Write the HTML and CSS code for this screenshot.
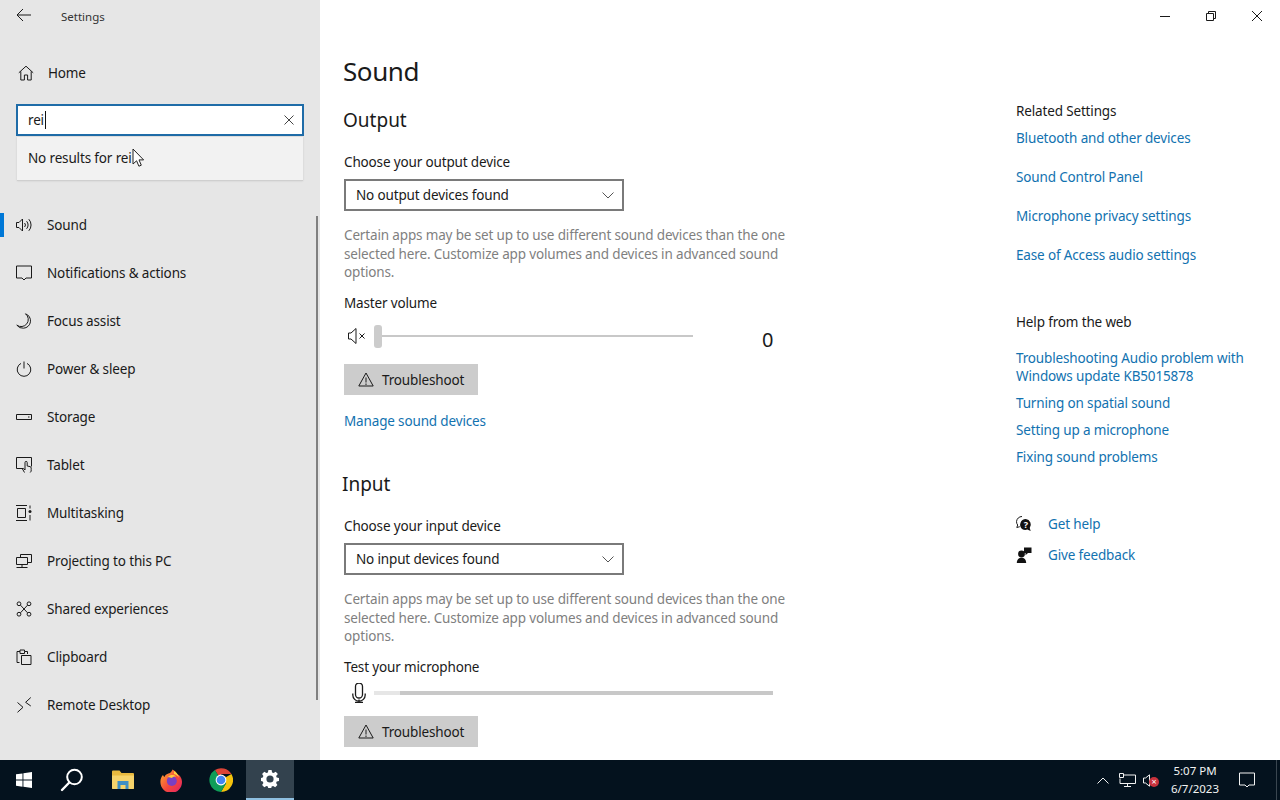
FILE: index.html
```html
<!DOCTYPE html>
<html lang="en">
<head>
<meta charset="utf-8">
<title>Settings</title>
<link rel="stylesheet" href="styles.css">
</head>
<body>
<div class="window">
  <aside class="sidebar">
    <div class="titlebar">
      <svg class="back" width="16" height="14" viewBox="0 0 16 14"><path d="M7 1 1 7l6 6M1 7h14" class="ln"/></svg>
      <span class="app-title">Settings</span>
    </div>
    <a class="home">
      <svg class="ico" width="16" height="16" viewBox="0 0 16 16"><path d="M.8 7.8 8 1.2l7.2 6.6M2.8 6.4v8.6h3.6v-5h3.2v5h3.6V6.4" class="ln"/></svg>
      <span>Home</span>
    </a>
    <div class="search">
      <span class="query">rei</span><span class="caret"></span>
      <svg class="clear" width="10" height="10" viewBox="0 0 10 10"><path d="M.5.5l9 9M9.5.5l-9 9" class="ln thin"/></svg>
    </div>
    <div class="results">No results for rei</div>
    <svg class="cursor" width="14" height="20" viewBox="0 0 14 20"><path d="M1 1v15l3.6-3.2 2.3 5.4 2.4-1-2.3-5.3h4.6z" fill="#fff" stroke="#222" stroke-width="1"/></svg>
    <nav class="nav">
      <a class="nav-item active">
        <svg class="ico" width="16" height="16" viewBox="0 0 16 16"><path d="M.5 5.500h2.500L6.500 2v12L3 10.500H.5zM8.600 6a3 3 0 0 1 0 4M10.600 4.200a5.600 5.600 0 0 1 0 7.600M12.800 2.200a8.600 8.600 0 0 1 0 11.600" class="ln"/></svg>
        <span>Sound</span>
      </a>
      <a class="nav-item">
        <svg class="ico" width="16" height="16" viewBox="0 0 16 16"><path d="M.5 1h15v12h-5.500L8 15l-2-2H.5z" class="ln"/></svg>
        <span>Notifications &amp; actions</span>
      </a>
      <a class="nav-item">
        <svg class="ico" width="16" height="16" viewBox="0 0 16 16"><path d="M9.500.8a7 7 0 0 1-8.700 11.300 7.300 7.300 0 0 0 6.700 3.100A7.400 7.400 0 0 0 9.500.8z" class="ln"/></svg>
        <span>Focus assist</span>
      </a>
      <a class="nav-item">
        <svg class="ico" width="16" height="16" viewBox="0 0 16 16"><path d="M5 2.400a6.800 6.800 0 1 0 6 0M8 .5v7" class="ln"/></svg>
        <span>Power &amp; sleep</span>
      </a>
      <a class="nav-item">
        <svg class="ico" width="16" height="16" viewBox="0 0 16 16"><path d="M.5 5.500h15v5H.5zM12 8h1.500" class="ln"/></svg>
        <span>Storage</span>
      </a>
      <a class="nav-item">
        <svg class="ico" width="16" height="16" viewBox="0 0 16 16"><path d="M7 11.500H.5V.5h15v9M8.500 15.500l-2-3.500 1-.6 1.500 1.600V5.500a1.100 1.100 0 0 1 2.200 0V9l2.800.6a1.500 1.500 0 0 1 1.200 1.500v1.400a3 3 0 0 1-1 3" class="ln"/></svg>
        <span>Tablet</span>
      </a>
      <a class="nav-item">
        <svg class="ico" width="16" height="16" viewBox="0 0 16 16"><path d="M0 .5h11M0 15.500h11M1.500 3.500h8v9h-8zM14 .5v3M14 10v5.500" class="ln"/><circle cx="14" cy="6.500" r="1.500" fill="#1a1a1a"/></svg>
        <span>Multitasking</span>
      </a>
      <a class="nav-item">
        <svg class="ico" width="16" height="16" viewBox="0 0 16 16"><path d="M4.500 4V1.500h11v8H12M.5 4.500h11v7H.5zM.5 14.500h11M6 11.500v3" class="ln"/></svg>
        <span>Projecting to this PC</span>
      </a>
      <a class="nav-item">
        <svg class="ico" width="16" height="16" viewBox="0 0 16 16"><circle cx="3" cy="2.800" r="1.900" class="ln"/><circle cx="13" cy="2.800" r="1.900" class="ln"/><circle cx="3" cy="13.200" r="1.900" class="ln"/><circle cx="13" cy="13.200" r="1.900" class="ln"/><path d="M4.500 4.200l7 7.600M11.500 4.200l-7 7.600" class="ln"/></svg>
        <span>Shared experiences</span>
      </a>
      <a class="nav-item">
        <svg class="ico" width="16" height="16" viewBox="0 0 16 16"><path d="M3.500 13.500h-2.500V2.500h3V1h4.500v1.500h3v2.500M4 2.500v2h4.500v-2M5.500 6.500H15v9H5.500z" class="ln"/></svg>
        <span>Clipboard</span>
      </a>
      <a class="nav-item">
        <svg class="ico" width="16" height="16" viewBox="0 0 16 16"><path d="M1.500 5.500 7 10.300l-5.500 5M14.800.5 9.600 5.300l5.200 3.700" class="ln"/></svg>
        <span>Remote Desktop</span>
      </a>
    </nav>
    <div class="scrollbar"></div>
  </aside>

  <main class="content">
    <div class="controls">
      <svg class="ctl" width="10" height="10" viewBox="0 0 10 10"><path d="M0 5.500h10" class="ln"/></svg>
      <svg class="ctl" width="10" height="10" viewBox="0 0 10 10"><path d="M.5 2.500h7v7h-7zM2.500 2.500v-2h7v7h-2" class="ln"/></svg>
      <svg class="ctl" width="10" height="10" viewBox="0 0 10 10"><path d="M0 0l10 10M10 0 0 10" class="ln"/></svg>
    </div>

    <section class="main-col">
      <h1 class="page-title">Sound</h1>
      <h2 class="section first">Output</h2>
      <div class="label gap-label">Choose your output device</div>
      <div class="select"><span>No output devices found</span><svg width="12" height="7" viewBox="0 0 12 7"><path d="M.5.500 6 6l5.500-5.500" class="ln grey"/></svg></div>
      <p class="hint">Certain apps may be set up to use different sound devices than the one selected here. Customize app volumes and devices in advanced sound options.</p>
      <div class="label after-hint">Master volume</div>
      <div class="volume">
        <svg class="vol-icon" width="18" height="18" viewBox="0 0 18 18"><path d="M.5 6h2.500L8 1.500v15L3 12H.5zM11.500 6.500l5 5M16.500 6.500l-5 5" class="ln"/></svg>
        <span class="thumb"></span>
        <span class="track"></span>
        <span class="vol-value">0</span>
      </div>
      <button class="trouble first-btn">
        <svg width="16" height="15" viewBox="0 0 16 15"><path d="M8 1 .8 14h14.400zM8 5.500v5M8 11.500v1.500" class="ln"/></svg>
        <span>Troubleshoot</span>
      </button>
      <a class="link manage">Manage sound devices</a>
      <h2 class="section input-head">Input</h2>
      <div class="label gap-label">Choose your input device</div>
      <div class="select"><span>No input devices found</span><svg width="12" height="7" viewBox="0 0 12 7"><path d="M.5.500 6 6l5.500-5.500" class="ln grey"/></svg></div>
      <p class="hint">Certain apps may be set up to use different sound devices than the one selected here. Customize app volumes and devices in advanced sound options.</p>
      <div class="label after-hint">Test your microphone</div>
      <div class="mic">
        <svg class="mic-icon" width="14" height="20" viewBox="0 0 14 20"><path d="M3.500 3.500a3.200 3.200 0 0 1 7 0v8a3.200 3.200 0 0 1-7 0zM.8 10.500v1.500a6.200 6.200 0 0 0 12.400 0v-1.500M7 16.500v3M3 19.500h8" class="ln mic-line"/></svg>
        <span class="meter"></span>
      </div>
      <button class="trouble second-btn">
        <svg width="16" height="15" viewBox="0 0 16 15"><path d="M8 1 .8 14h14.400zM8 5.500v5M8 11.500v1.500" class="ln"/></svg>
        <span>Troubleshoot</span>
      </button>
    </section>

    <section class="side-col">
      <div class="label side-head">Related Settings</div>
      <a class="link rel">Bluetooth and other devices</a>
      <a class="link rel">Sound Control Panel</a>
      <a class="link rel">Microphone privacy settings</a>
      <a class="link rel">Ease of Access audio settings</a>
      <div class="label web-head">Help from the web</div>
      <a class="link web first-web">Troubleshooting Audio problem with Windows update KB5015878</a>
      <a class="link web">Turning on spatial sound</a>
      <a class="link web">Setting up a microphone</a>
      <a class="link web">Fixing sound problems</a>
      <div class="help first-help">
        <svg width="16" height="16" viewBox="0 0 16 16"><path d="M6 .5a5.500 5.500 0 0 0-5.500 5.200c0 1.300.5 2.400 1.200 3.300L.8 11.500l3-.8" class="ln"/><path d="M9.800 3a5.700 5.700 0 0 0-3.800 9.900c1.500 1.100 3.800 1.300 5.300.7l3.400 1.400-1-2.900A5.700 5.700 0 0 0 9.800 3z" fill="#111"/><text x="9.900" y="12" class="help-q">?</text></svg>
        <a class="link">Get help</a>
      </div>
      <div class="help">
        <svg width="16" height="16" viewBox="0 0 16 16"><circle cx="5.500" cy="7" r="3.400" fill="#111"/><path d="M.8 16c0-3.400 2-5.200 4.700-5.200s4.700 1.800 4.700 5.200z" fill="#111"/><path d="M8 .5h7.500v5.500h-3.500l-2.500 2.200V6H8z" fill="#111"/></svg>
        <a class="link">Give feedback</a>
      </div>
    </section>
  </main>
</div>

<footer class="taskbar">
  <div class="task-left">
    <span class="task-btn">
      <svg width="16" height="16" viewBox="0 0 16 16"><path d="M0 2.300 6.500 1.400v6.200H0zM7.400 1.300 16 0v7.600H7.400zM0 8.500h6.500v6.200L0 13.800zM7.400 8.500H16V16l-8.600-1.300z" fill="#fff"/></svg>
    </span>
    <span class="task-btn">
      <svg width="24" height="24" viewBox="0 0 24 24"><circle cx="14.500" cy="9" r="7.300" fill="none" stroke="#fff" stroke-width="2"/><path d="M9.300 14.500 2 22" fill="none" stroke="#fff" stroke-width="2.400" stroke-linecap="round"/></svg>
    </span>
    <div class="task-apps">
      <span class="task-btn">
        <svg width="22" height="20" viewBox="0 0 22 20"><path d="M0 1.500a1 1 0 0 1 1-1h6.500l2 2.500H21a1 1 0 0 1 1 1V18a1 1 0 0 1-1 1H1a1 1 0 0 1-1-1z" fill="#e8b93f"/><path d="M0 5.500h22V18a1 1 0 0 1-1 1H1a1 1 0 0 1-1-1z" fill="#f6d36b"/><path d="M5.500 19v-8h11v8h-3v-4h-5v4z" fill="#3f8fc4"/></svg>
      </span>
      <span class="task-btn">
        <svg width="24" height="24" viewBox="0 0 24 24"><defs><linearGradient id="ff" x1="0" y1="0" x2="1" y2="1"><stop offset="0" stop-color="#ffb02e"/><stop offset=".55" stop-color="#f4483c"/><stop offset="1" stop-color="#e3206a"/></linearGradient></defs><path d="M12.500 1.500c3 1.500 4 3 4.500 4.500 2.500 1 5 3.800 5 8a10.800 10.800 0 0 1-21.600 0c0-3 1-5.500 2.600-7 .4 1 .8 1.600 1.500 2 .8-2.500 3.400-3.700 5.500-4 1-1 2-2 2.500-3.500z" fill="url(#ff)"/><circle cx="11.800" cy="13" r="5" fill="#7b3fc4"/><path d="M8 9c2-2.500 6-2.500 8-.5-1.500-.2-3 .2-4 1.500-1.200-.4-2.800-.7-4-1z" fill="#ffcb3d"/><path d="M14 3c2 .8 4.500 3.500 5 7-1-2-3-3.500-5-4z" fill="#ffd23f"/></svg>
      </span>
      <span class="task-btn">
        <svg width="24" height="24" viewBox="0 0 24 24"><path d="M12 12 5.900 1.900A12 12 0 0 1 22.400 6H12z" fill="#db4437"/><path d="M12 12 22.400 6A12 12 0 0 1 12 24l5.200-9z" fill="#f4c20d"/><path d="M12 12l5.200 3-5.200 9A12 12 0 0 1 5.900 1.900L12 12z" fill="#0f9d58"/><circle cx="12" cy="12" r="5.400" fill="#fff"/><circle cx="12" cy="12" r="4.300" fill="#4285f4"/></svg>
      </span>
      <span class="task-btn task-active">
        <svg width="18" height="18" viewBox="0 0 18 18"><path d="M7.400 0h3.200l.5 2.400 1.500.6 2.100-1.300 2.200 2.200L15.100 6l.6 1.500 2.300.5v2.900l-2.300.6-.6 1.500 1.300 2.100-2.200 2.200-2.100-1.300-1.500.6-.5 2.400H7.400l-.5-2.400-1.500-.6-2.100 1.300-2.200-2.200L2.400 13l-.6-1.500-1.800-.6V8l1.800-.5.6-1.500-1.300-2.100 2.200-2.200 2.100 1.300 1.500-.6z" fill="#fff"/><circle cx="9" cy="9" r="3.600" fill="#33424e"/></svg>
      </span>
    </div>
  </div>
  <div class="tray">
    <svg class="chev" width="12" height="7" viewBox="0 0 12 7"><path d="M.5 6.500 6 1l5.500 5.500" class="ln light"/></svg>
    <svg class="net" width="17" height="14" viewBox="0 0 17 14"><path d="M5 2h11.500v8.500H1V5.500M8.500 10.500v3M5 13.500h7M.5.500h4v4h-4z" class="ln light"/></svg>
    <span class="speaker">
      <svg width="8" height="13" viewBox="0 0 8 13"><path d="M.5 4h2L6.500.8v11.400L2.500 9h-2z" class="ln light"/></svg>
      <span class="mute-badge">×</span>
    </span>
    <div class="clock"><span>5:07 PM</span><span>6/7/2023</span></div>
    <svg class="notif" width="16" height="16" viewBox="0 0 16 16"><path d="M.5 1h15v12h-5.500L8 15l-2-2H.5z" class="ln light"/></svg>
    <span class="show-desktop"></span>
  </div>
</footer>
</body>
</html>
```

FILE: styles.css
```css
* { box-sizing: border-box; }
html, body { margin: 0; padding: 0; }
body {
  width: 1280px;
  height: 800px;
  overflow: hidden;
  font-family: "Noto Sans", "Open Sans", sans-serif;
  font-size: 13.5px;
  letter-spacing: -0.15px;
  color: #1a1a1a;
  background: #fff;
  display: flex;
  flex-direction: column;
}
.ln { fill: none; stroke: #1a1a1a; stroke-width: 1; }
.ln.thin { stroke: #444; }
.ln.grey { stroke: #555; }
.ln.light { stroke: #f2f2f2; }
.ln.mic-line { stroke-width: 1.3; }

.window { flex: 1; display: flex; min-height: 0; }

/* Sidebar */
.sidebar {
  position: relative;
  width: 320px;
  background: #e6e6e6;
  flex: none;
}
.titlebar {
  height: 32px;
  display: flex;
  align-items: center;
  padding-left: 16px;
}
.back { margin-right: 29px; margin-top: -2px; }
.app-title { font-size: 11.5px; letter-spacing: 0; color: #333; }
.home {
  margin-top: 17px;
  height: 48px;
  display: flex;
  align-items: center;
  padding-left: 18px;
  gap: 14px;
}
.search {
  position: relative;
  margin: 7px 16px 0;
  height: 32px;
  background: #fff;
  border: 2px solid #1f6ca8;
  display: flex;
  align-items: center;
  padding-left: 10px;
}
.caret { display: block; width: 1px; height: 18px; background: #111; margin-left: 1px; }
.clear { position: absolute; right: 8px; top: 9px; }
.results {
  position: absolute;
  left: 17px;
  top: 137px;
  width: 286px;
  height: 44px;
  background: #f2f2f2;
  border-bottom: 1px solid #cfcfcf;
  box-shadow: 0 0 2px rgba(0,0,0,.12);
  padding-left: 11px;
  line-height: 42px;
}
.cursor { position: absolute; left: 132px; top: 148px; z-index: 3; }
.nav { margin-top: 65px; }
.nav-item {
  position: relative;
  height: 48px;
  display: flex;
  align-items: center;
  padding-left: 16px;
  gap: 15px;
}
.nav-item.active::before {
  content: "";
  position: absolute;
  left: 0;
  top: 12px;
  width: 4px;
  height: 24px;
  background: #0078d7;
}
.scrollbar {
  position: absolute;
  left: 316px;
  top: 216px;
  width: 2px;
  height: 484px;
  background: #808080;
}

/* Content */
.content {
  position: relative;
  flex: 1;
  min-width: 0;
  display: flex;
  overflow: hidden;
  padding-left: 24px;
}
.controls {
  position: absolute;
  right: 18px;
  top: 11px;
  display: flex;
  gap: 36px;
}
.ctl { display: block; }

.main-col { width: 672px; flex: none; }
.page-title {
  margin: 51px 0 0 -1px;
  font-size: 26px;
  letter-spacing: -0.4px;
  font-weight: 400;
  line-height: 40px;
}
.section { margin: 0; font-size: 19px; letter-spacing: 0; font-weight: 400; line-height: 28px; }
.section.first { margin-top: 15px; margin-left: -1px; }
.section.input-head { margin-top: 39px; margin-left: -2px; }
.label { line-height: 20px; }
.gap-label { margin-top: 18px; }
.select {
  margin-top: 7px;
  width: 280px;
  height: 32px;
  border: 2px solid #7a7a7a;
  background: #fff;
  display: flex;
  align-items: center;
  justify-content: space-between;
  padding: 0 8px 0 10px;
}
.hint {
  margin: 15px 0 0;
  width: 445px;
  color: #7f7f7f;
  line-height: 18.5px;
}
.after-hint { margin-top: 11.5px; }
.volume {
  margin-top: 11px;
  height: 24px;
  display: flex;
  align-items: center;
}
.vol-icon { margin-left: 4px; flex: none; }
.thumb {
  margin-left: 8px;
  width: 8px;
  height: 23px;
  border-radius: 3px;
  background: #cccccc;
  flex: none;
}
.track { width: 311px; height: 2px; background: #c8c8c8; flex: none; }
.vol-value {
  margin-left: 69px;
  margin-top: 8px;
  font-size: 20px;
  letter-spacing: 0;
  line-height: 24px;
}
.trouble {
  display: flex;
  align-items: center;
  gap: 8px;
  width: 134px;
  height: 31px;
  border: 0;
  padding: 0 0 0 14px;
  background: #cccccc;
  color: #1a1a1a;
  font: inherit;
  letter-spacing: inherit;
}
.first-btn { margin-top: 16px; }
.second-btn { margin-top: 11px; }
.link { color: #1272b0; text-decoration: none; display: block; line-height: 20px; }
.manage { margin-top: 16px; }
.mic {
  margin-top: 4px;
  height: 24px;
  display: flex;
  align-items: center;
}
.mic-icon { margin-left: 8px; flex: none; }
.meter {
  margin-left: 8px;
  width: 399px;
  height: 4px;
  background: linear-gradient(90deg, #e6e6e6 0, #e6e6e6 26px, #c8c8c8 26px);
  flex: none;
}

.side-col { width: 240px; flex: none; }
.side-head { margin-top: 101px; }
.rel { margin-bottom: 19px; }
.rel:first-of-type { margin-top: 7px; }
.side-col .web-head { margin-top: 47px; }
.web { margin-bottom: 9px; line-height: 18px; }
.first-web { margin-top: 17px; }
.help { display: flex; align-items: center; gap: 16px; height: 20px; margin-bottom: 11px; }
.first-help { margin-top: 48px; }
.help-q { font-size: 9px; font-weight: 700; fill: #fff; text-anchor: middle; }

/* Taskbar */
.taskbar {
  height: 40px;
  flex: none;
  background: #04121e;
  display: flex;
  justify-content: space-between;
  color: #f2f2f2;
}
.task-left { display: flex; }
.task-apps { display: flex; gap: 1px; margin-left: 3px; }
.task-btn {
  width: 48px;
  height: 40px;
  display: flex;
  align-items: center;
  justify-content: center;
}
.task-active { background: #33424e; border-bottom: 2px solid #8fbfe0; }
.tray { display: flex; align-items: center; }
.chev { margin-right: 10px; }
.net { margin-right: 7px; }
.speaker { position: relative; width: 16px; height: 16px; display: flex; align-items: center; }
.mute-badge {
  position: absolute;
  left: 6px;
  top: 5px;
  width: 10px;
  height: 10px;
  border-radius: 50%;
  background: #c8323c;
  color: #fff;
  font-size: 9px;
  line-height: 10px;
  text-align: center;
}
.clock {
  width: 72px;
  display: flex;
  flex-direction: column;
  align-items: center;
  font-size: 11.5px;
  letter-spacing: 0;
  line-height: 18px;
}
.notif { margin-left: 8px; margin-right: 21px; }
.show-desktop { width: 1px; height: 40px; background: #3a4650; margin-right: 3px; }
```
